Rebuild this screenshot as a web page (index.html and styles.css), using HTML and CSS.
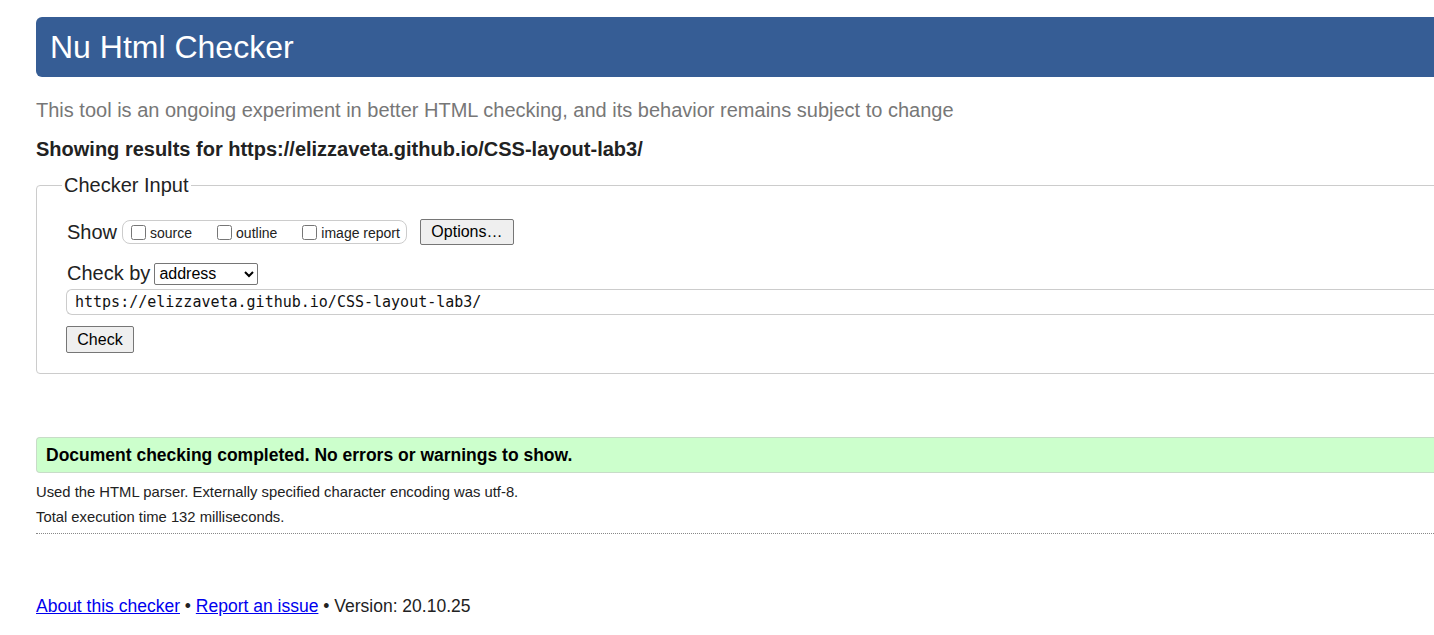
FILE: index.html
```html
<!DOCTYPE html>
<html lang="en">
<head>
<meta charset="utf-8">
<title>Nu Html Checker</title>
<link rel="stylesheet" href="styles.css">
</head>
<body>
<div class="page">
  <h1 class="banner">Nu Html Checker</h1>
  <p class="about">This tool is an ongoing experiment in better HTML checking, and its behavior remains subject to change</p>
  <p class="showing">Showing results for https://elizzaveta.github.io/CSS-layout-lab3/</p>
  <fieldset class="input-set">
    <legend class="legend">Checker Input</legend>
    <div class="row show-row">
      <span class="row-label">Show</span>
      <span class="opts">
        <label class="opt"><input type="checkbox" class="cb"><span>source</span></label>
        <label class="opt"><input type="checkbox" class="cb"><span>outline</span></label>
        <label class="opt"><input type="checkbox" class="cb"><span>image report</span></label>
      </span>
      <button class="btn options-btn" type="button">Options…</button>
    </div>
    <div class="row by-row">
      <span class="row-label">Check by</span>
      <select class="sel"><option>address</option></select>
    </div>
    <div class="url-box">https://elizzaveta.github.io/CSS-layout-lab3/</div>
    <button class="btn check-btn" type="button">Check</button>
  </fieldset>
  <div class="success">Document checking completed. No errors or warnings to show.</div>
  <p class="detail first">Used the HTML parser. Externally specified character encoding was utf-8.</p>
  <p class="detail">Total execution time 132 milliseconds.</p>
  <hr class="rule">
  <p class="footer"><a href="#">About this checker</a> • <a href="#">Report an issue</a> • Version: 20.10.25</p>
</div>
</body>
</html>
```
FILE: styles.css
```css
html, body {
  margin: 0;
  padding: 0;
  overflow: hidden;
  background: #fff;
}
body {
  font-family: "Liberation Sans", Arial, sans-serif;
  color: #222;
}
.page {
  width: 1480px;
  padding: 17px 0 0 36px;
}
.banner {
  margin: 0;
  height: 60px;
  line-height: 60px;
  padding-left: 14px;
  background: #365d95;
  color: #fff;
  font-size: 32px;
  font-weight: normal;
  border-radius: 6px;
}
.about {
  margin: 21px 0 0;
  font-size: 20px;
  line-height: 24px;
  color: #777;
}
.showing {
  margin: 15px 0 0;
  font-size: 20px;
  line-height: 24px;
  font-weight: bold;
  color: #222;
}
.input-set {
  margin: 13px 0 0;
  padding: 22px 0 20px 30px;
  border: 1px solid #ccc;
  border-radius: 4px;
  min-width: 0;
}
.legend {
  font-size: 20px;
  padding: 0 2px;
  margin-left: -5px;
  color: #222;
}
.row {
  display: flex;
  align-items: center;
}
.row-label {
  font-size: 20px;
  margin-right: 4px;
}
.opts {
  display: flex;
  align-items: center;
  height: 22px;
  border: 1px solid #ccc;
  border-radius: 8px;
  padding: 0 6px 0 3px;
  gap: 20px;
  font-size: 14px;
  margin-left: 1px;
}
.opt {
  display: flex;
  align-items: center;
}
.cb {
  margin: 0 4px 0 5px;
  width: 15px;
  height: 15px;
}
.opt span {
  position: relative;
  top: 1px;
}
.btn {
  font-family: "Liberation Sans", Arial, sans-serif;
  font-size: 16px;
  color: #000;
  background: #efefef;
  border: 1px solid #767676;
  border-radius: 2px;
  padding: 0 8px;
}
.options-btn {
  margin-left: 13px;
  height: 26px;
  width: 94px;
}
.by-row {
  margin-top: 17px;
}
.by-row .row-label {
  margin-right: 4px;
}
.sel {
  width: 104px;
  height: 22px;
  font-family: "Liberation Sans", Arial, sans-serif;
  font-size: 16px;
  color: #000;
  border: 1px solid #767676;
  border-radius: 2px;
  background: #fff;
}
.url-box {
  margin-top: 4px;
  height: 24px;
  line-height: 24px;
  border: 1px solid #ccc;
  border-right: none;
  border-radius: 6px 0 0 6px;
  padding-left: 8px;
  font-family: "DejaVu Sans Mono", "Liberation Mono", monospace;
  font-size: 15px;
  color: #111;
  margin-left: -1px;
}
.check-btn {
  display: block;
  margin-top: 11px;
  margin-left: -1px;
  width: 68px;
  height: 27px;
}
.success {
  margin-top: 63px;
  height: 34px;
  line-height: 34px;
  background: #ccffcc;
  border: 1px solid #c8dcc8;
  border-right: none;
  border-radius: 4px 0 0 4px;
  padding-left: 9px;
  font-size: 17.5px;
  font-weight: bold;
  color: #000;
}
.detail {
  margin: 0;
  font-size: 14.8px;
  line-height: 25px;
  color: #222;
}
.detail.first {
  margin-top: 7px;
}
.rule {
  margin: 3px 0 0;
  border: none;
  border-top: 1px dotted #888;
  height: 0;
}
.footer {
  margin: 61px 0 0;
  font-size: 17.5px;
  line-height: 22px;
  color: #222;
}
.footer a {
  color: #0000ee;
}
```
